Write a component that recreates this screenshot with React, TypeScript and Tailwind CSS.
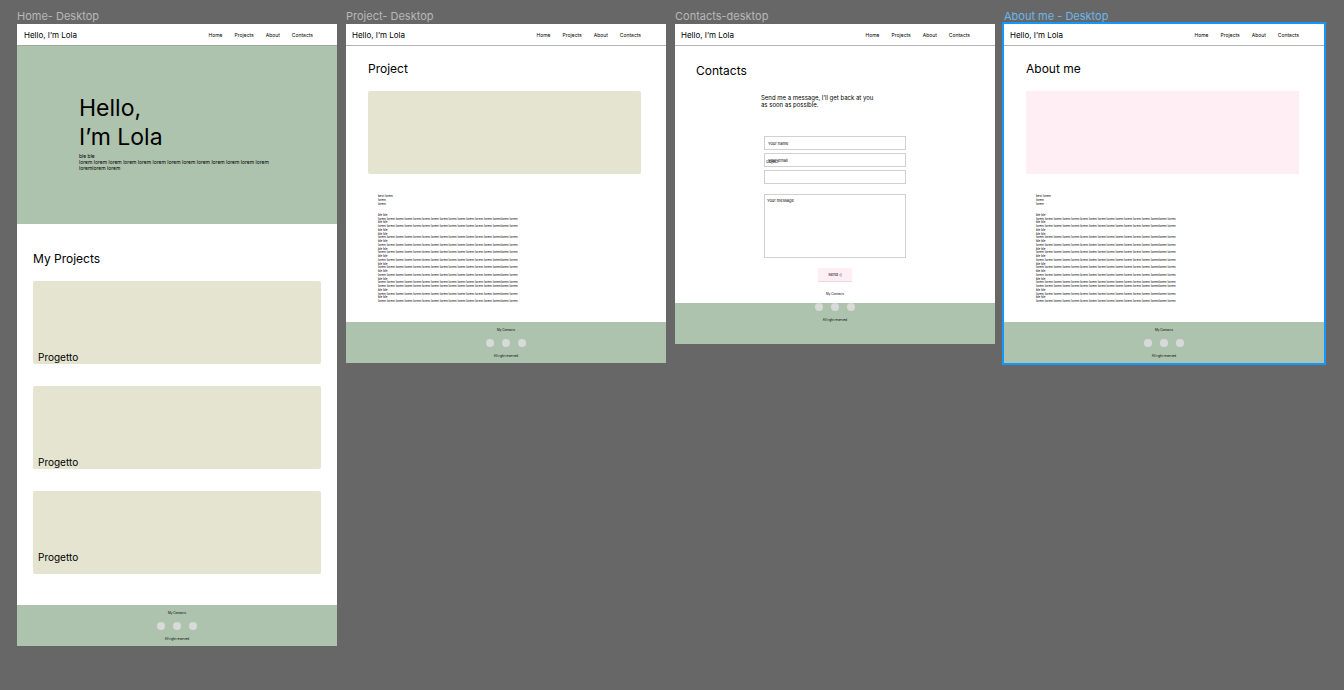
import type { ReactNode } from "react";

const LOREM = "lorem ".repeat(13) + "loremlorem lorem";

const BODY: string[] = [
  "best lorem",
  "lorem",
  "lorem",
  "",
  "",
  "ble ble",
  LOREM,
  "ble ble",
  LOREM,
  "ble ble",
  "ble ble",
  LOREM,
  "ble ble",
  LOREM,
  "ble ble",
  LOREM,
  "ble ble",
  LOREM,
  "ble ble",
  LOREM,
  "ble ble",
  LOREM,
  "ble ble",
  LOREM,
  LOREM,
  "ble ble",
  LOREM,
  "ble ble",
  LOREM,
];

function Header({ home = false }: { home?: boolean }) {
  return (
    <header
      className={`flex h-[22px] shrink-0 items-center justify-between border-b bg-white ${
        home ? "border-[#9bab9b] pr-6 pl-[7px]" : "border-[#b3b3b3] pr-[25px] pl-[6px]"
      }`}
    >
      <span className="text-[8px] leading-[10px]">Hello, I’m Lola</span>
      <nav className="flex gap-3 text-[5px] leading-[6px]">
        <a href="#home">Home</a>
        <a href="#projects">Projects</a>
        <a href="#about">About</a>
        <a href="#contacts">Contacts</a>
      </nav>
    </header>
  );
}

function Footer({ raised = false }: { raised?: boolean }) {
  return (
    <footer className="h-[41px] shrink-0 bg-[#aec3ae]">
      <div
        className={`flex flex-col items-center text-[3px] leading-[4px] ${raised ? "-translate-y-[11px]" : "pt-[6px]"}`}
      >
        <p>My Contacts</p>
        <div className="my-[7px] flex gap-2">
          <a href="#social-1" aria-label="First profile" className="size-2 rounded-full bg-[#d9d9d9]" />
          <a href="#social-2" aria-label="Second profile" className="size-2 rounded-full bg-[#d9d9d9]" />
          <a href="#social-3" aria-label="Third profile" className="size-2 rounded-full bg-[#d9d9d9]" />
        </div>
        <p>All right reserved</p>
      </div>
    </footer>
  );
}

function Frame({ name, selected = false, children }: { name: string; selected?: boolean; children: ReactNode }) {
  return (
    <section className="min-w-0">
      <h2 className={`h-4 text-[11px] leading-4 whitespace-nowrap ${selected ? "text-[#6cb6ea]" : "text-[#b8b8b8]"}`}>
        {name}
      </h2>
      <div className={`flex flex-col bg-white ${selected ? "outline-2 outline-[#1496fa]" : ""}`}>{children}</div>
    </section>
  );
}

function Article({ title, tone }: { title: string; tone: string }) {
  return (
    <>
      <Header />
      <main className="px-[22px] pt-[15px] pb-[18px]">
        <h1 className="text-[12px] leading-4">{title}</h1>
        <div className={`mt-[14px] mr-[3px] h-[83px] ${tone}`} />
        <div className="mt-[21px] ml-[10px] grid h-[109px] auto-rows-fr text-[3px] leading-[3px] whitespace-nowrap">
          {BODY.map((text, i) => (
            <p key={i}>{text}</p>
          ))}
        </div>
      </main>
      <Footer />
    </>
  );
}

function ProjectCard({ className }: { className: string }) {
  return (
    <article className={`flex h-[83px] items-end rounded-[2px] bg-[#e4e4d0] px-[5px] ${className}`}>
      <h3 className="text-[10px] leading-3">Progetto</h3>
    </article>
  );
}

function Home() {
  return (
    <>
      <Header home />
      <div className="h-[178px] bg-[#aec3ae] px-[62px] pt-12">
        <h1 className="text-[23px] leading-[29px]">
          Hello,
          <br />
          I’m Lola
        </h1>
        <p className="mt-px text-[5px] leading-[6px] whitespace-nowrap">
          ble ble
          <br />
          {"lorem ".repeat(13)}
          <br />
          loremlorem lorem
        </p>
      </div>
      <main className="flex flex-col px-4 pt-[27px] pb-[31px]">
        <h2 className="text-[12px] leading-4">My Projects</h2>
        <div className="mt-[14px] flex flex-col gap-[22px]">
          <ProjectCard className="pb-px" />
          <ProjectCard className="pb-px" />
          <ProjectCard className="pb-[11px]" />
        </div>
      </main>
      <Footer />
    </>
  );
}

const FIELD =
  "block h-[14px] w-full border border-[#d0d0d0] bg-white px-[3px] text-[4px] leading-[5px] outline-none placeholder:text-black placeholder:opacity-100";

function Contacts() {
  return (
    <>
      <Header />
      <main className="px-[21px] pt-[17px] pb-[22px]">
        <h1 className="text-[12px] leading-4">Contacts</h1>
        <p className="mt-[15px] ml-[65px] text-[6px] leading-[7px]">
          Send me a message, I’ll get back at you
          <br />
          as soon as possible.
        </p>
        <form className="mx-auto mt-7 flex w-[142px] flex-col items-center" onSubmit={(e) => e.preventDefault()}>
          <div className="flex w-full flex-col gap-[3px]">
            <input aria-label="Your name" placeholder="Your name" className={FIELD} />
            <input aria-label="Your email" placeholder="Your email" className={FIELD} />
            <div className="relative">
              <label htmlFor="object" className="absolute -top-[11px] left-[2px] text-[4px] leading-[5px]">
                Object
              </label>
              <input id="object" className={FIELD} />
            </div>
          </div>
          <textarea
            aria-label="Your message"
            placeholder="Your message"
            className="mt-[10px] block h-16 w-full resize-none border border-[#d0d0d0] bg-white px-[2px] py-[3px] text-[4px] leading-[5px] outline-none placeholder:text-black placeholder:opacity-100"
          />
          <button
            type="submit"
            className="mt-[10px] h-[13px] w-[34px] rounded-[1px] bg-[#ffeef4] text-[4px] leading-[5px] shadow-[0_1px_1px_rgba(0,0,0,0.15)]"
          >
            Send :)
          </button>
        </form>
      </main>
      <Footer raised />
    </>
  );
}

export default function App() {
  return (
    <div className="min-h-screen bg-[#676767] pt-2 pr-5 pb-11 pl-[17px] font-['Inter',sans-serif] text-black">
      <div className="grid grid-cols-4 items-start gap-[9px]">
        <Frame name="Home- Desktop">
          <Home />
        </Frame>
        <Frame name="Project- Desktop">
          <Article title="Project" tone="rounded-[2px] bg-[#e4e4d0]" />
        </Frame>
        <Frame name="Contacts-desktop">
          <Contacts />
        </Frame>
        <Frame name="About me - Desktop" selected>
          <Article title="About me" tone="bg-[#ffeef4]" />
        </Frame>
      </div>
    </div>
  );
}
